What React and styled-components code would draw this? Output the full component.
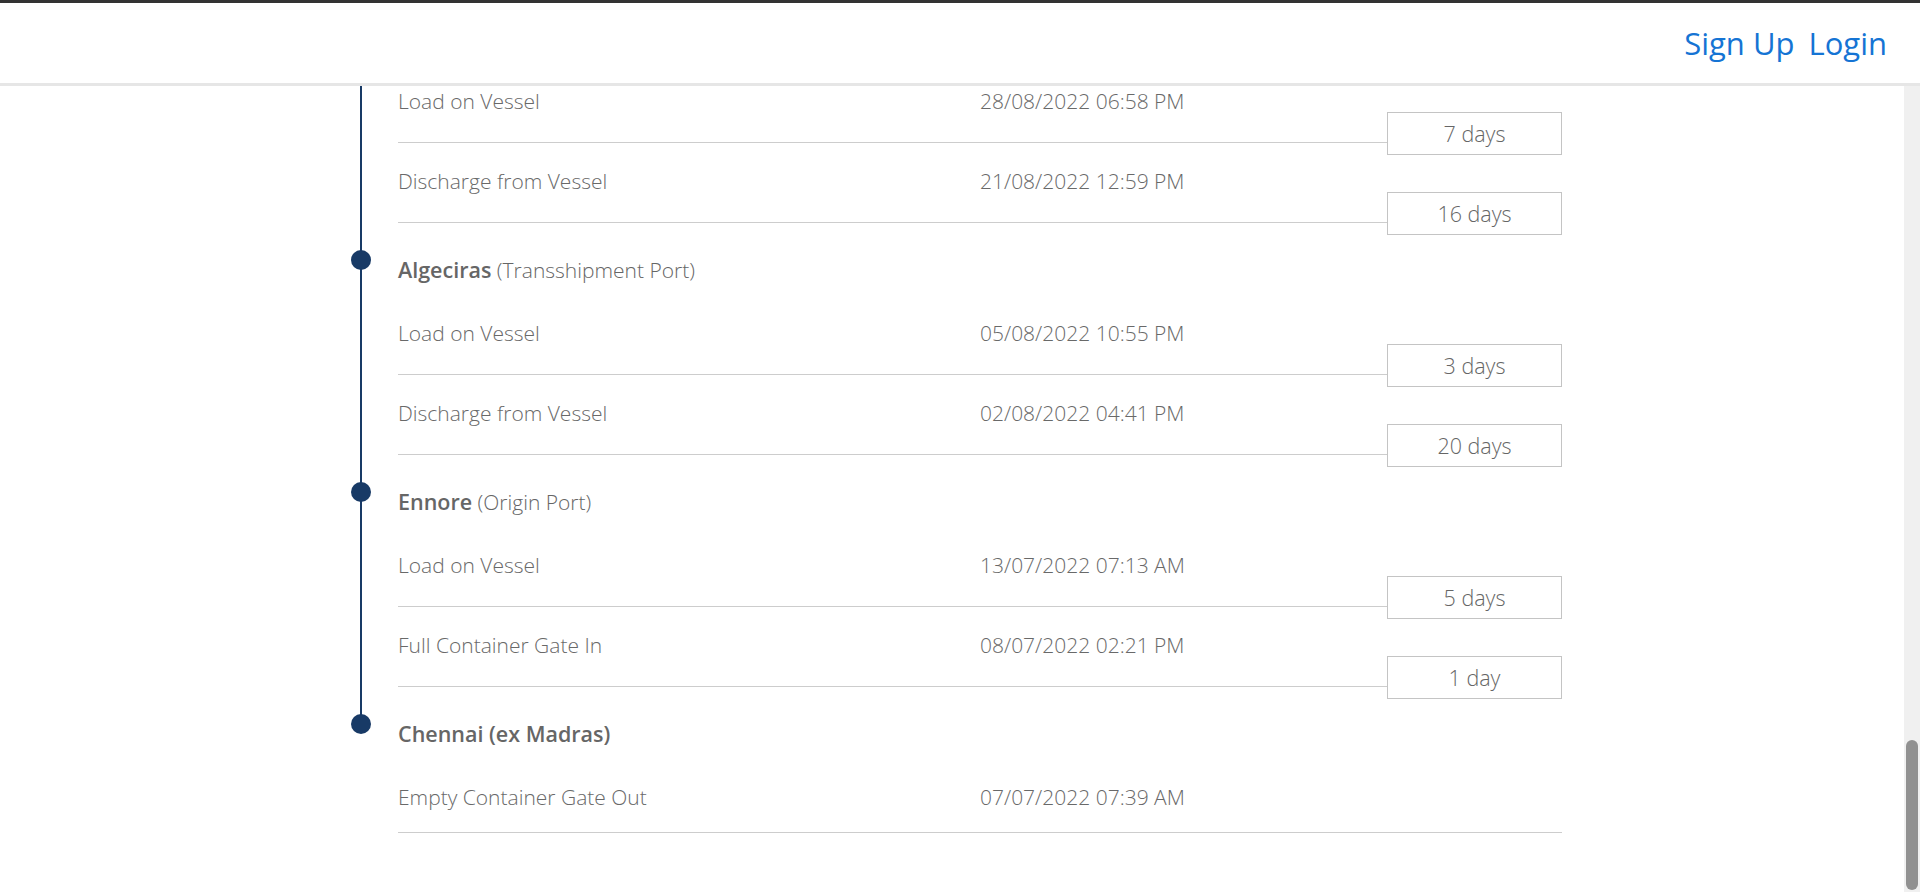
import React, { useLayoutEffect, useRef } from 'react';
import styled, { createGlobalStyle } from 'styled-components';

const NAVY = '#183a66';

const timeline = [
  { port: 'Valencia', note: '(Destination Port)', events: [
    { label: 'Empty Container Returned', date: '14/09/2022 09:12 AM', gap: '2 days' },
    { label: 'Full Container Gate Out', date: '12/09/2022 03:40 PM', gap: '3 days' },
    { label: 'Discharge from Vessel', date: '09/09/2022 11:05 AM', gap: '12 days' },
  ] },
  { port: 'Port Said', note: '(Transshipment Port)', events: [
    { label: 'Load on Vessel', date: '28/08/2022 06:58 PM', gap: '7 days' },
    { label: 'Discharge from Vessel', date: '21/08/2022 12:59 PM', gap: '16 days' },
  ] },
  { port: 'Algeciras', note: '(Transshipment Port)', events: [
    { label: 'Load on Vessel', date: '05/08/2022 10:55 PM', gap: '3 days' },
    { label: 'Discharge from Vessel', date: '02/08/2022 04:41 PM', gap: '20 days' },
  ] },
  { port: 'Ennore', note: '(Origin Port)', events: [
    { label: 'Load on Vessel', date: '13/07/2022 07:13 AM', gap: '5 days' },
    { label: 'Full Container Gate In', date: '08/07/2022 02:21 PM', gap: '1 day' },
  ] },
  { port: 'Chennai (ex Madras)', events: [
    { label: 'Empty Container Gate Out', date: '07/07/2022 07:39 AM' },
  ] },
];

const GlobalStyle = createGlobalStyle`
  html, body {
    margin: 0;
    padding: 0;
    height: 100%;
    overflow: hidden;
  }
  body {
    font-family: "Open Sans", "Liberation Sans", sans-serif;
    background: #fff;
  }
  #root {
    height: 100%;
  }
`;

const Shell = styled.div`
  height: 100vh;
  display: flex;
  flex-direction: column;
`;

const Header = styled.header`
  flex-shrink: 0;
  height: 80px;
  border-top: 3px solid #333;
  border-bottom: 3px solid #e6e6e6;
  display: flex;
  align-items: center;
  justify-content: flex-end;
  gap: 14px;
  padding-right: 33px;
`;

const NavLink = styled.a`
  font-size: 31px;
  line-height: 1;
  color: #1574d4;
  text-decoration: none;
`;

const Body = styled.div`
  flex: 1;
  min-height: 0;
  display: flex;
`;

const Scroller = styled.main`
  flex: 1;
  overflow: hidden;
`;

const Track = styled.div`
  width: 16px;
  flex-shrink: 0;
  background: #f0f0f0;
  display: flex;
  flex-direction: column;
  justify-content: flex-end;
  align-items: center;
  padding-bottom: 2px;
  box-sizing: border-box;
`;

const Thumb = styled.div`
  width: 12px;
  height: 150px;
  border-radius: 6px;
  background: #919191;
`;

const Container = styled.div`
  width: 1220px;
  margin: 0 auto;
  padding-bottom: 59px;
`;

const Summary = styled.section`
  min-height: 3100px;
  padding: 40px 0 0 56px;
  color: #666;
`;

const Title = styled.h1`
  margin: 0;
  font-size: 28px;
  font-weight: 600;
  color: #444;
`;

const Row = styled.div`
  display: flex;
`;

const Rail = styled.div`
  width: 56px;
  flex-shrink: 0;
  background-image: ${p => (p.$line === 'none' ? 'none' : `linear-gradient(${NAVY}, ${NAVY})`)};
  background-repeat: no-repeat;
  background-position: 18px ${p => (p.$line === 'bottom' ? '25px' : '0')};
  background-size: 2px ${p => (p.$line === 'top' ? '25px' : '100%')};
`;

const Dot = styled.span`
  display: block;
  width: 20px;
  height: 20px;
  border-radius: 50%;
  background: ${NAVY};
  margin: 15px 0 0 9px;
`;

const PortBody = styled.div`
  flex: 1;
  padding: 24px 0 26px;
  font-size: 21px;
  line-height: 22px;
  font-weight: 300;
  color: #666;
`;

const PortName = styled.strong`
  font-weight: 600;
  font-size: 21.5px;
  color: #666;
`;

const EventBody = styled.div`
  flex: 1;
  padding-top: 15px;
`;

const EventLine = styled.div`
  display: grid;
  grid-template-columns: 582px 1fr;
  font-size: 21px;
  line-height: 22px;
  font-weight: 300;
  color: #696969;
`;

const EventFoot = styled.div`
  display: flex;
  align-items: flex-start;
`;

const Rule = styled.div`
  flex: 1;
  border-top: 1px solid #cdcdcd;
  margin-top: ${p => p.$offset}px;
`;

const Duration = styled.div`
  width: 175px;
  height: 43px;
  box-sizing: border-box;
  border: 1px solid #c4c4c4;
  display: flex;
  align-items: center;
  justify-content: center;
  font-size: 21.5px;
  font-weight: 300;
  color: #666;
`;

function PortRow({ port, note, first, last }) {
  let line = 'full';
  if (first) line = 'bottom';
  if (last) line = 'top';
  return (
    <Row>
      <Rail $line={line}>
        <Dot />
      </Rail>
      <PortBody>
        <PortName>{port}</PortName>
        {note ? ' ' + note : ''}
      </PortBody>
    </Row>
  );
}

function EventRow({ label, date, gap, end }) {
  return (
    <Row>
      <Rail $line={end ? 'none' : 'full'} />
      <EventBody>
        <EventLine>
          <span>{label}</span>
          <span>{date}</span>
        </EventLine>
        <EventFoot>
          <Rule $offset={gap ? 30 : 24} />
          {gap && <Duration>{gap}</Duration>}
        </EventFoot>
      </EventBody>
    </Row>
  );
}

export default function App() {
  const scrollRef = useRef(null);

  useLayoutEffect(() => {
    const el = scrollRef.current;
    if (el) el.scrollTop = el.scrollHeight;
  }, []);

  return (
    <Shell>
      <GlobalStyle />
      <Header>
        <NavLink href="#">Sign Up</NavLink>
        <NavLink href="#">Login</NavLink>
      </Header>
      <Body>
        <Scroller ref={scrollRef}>
          <Container>
            <Summary>
              <Title>Container Tracking</Title>
            </Summary>
            {timeline.map((group, gi) => {
              const lastGroup = gi === timeline.length - 1;
              return (
                <React.Fragment key={group.port}>
                  <PortRow port={group.port} note={group.note} first={gi === 0} last={lastGroup} />
                  {group.events.map((ev, ei) => (
                    <EventRow key={ei} {...ev} end={lastGroup} />
                  ))}
                </React.Fragment>
              );
            })}
          </Container>
        </Scroller>
        <Track>
          <Thumb />
        </Track>
      </Body>
    </Shell>
  );
}
